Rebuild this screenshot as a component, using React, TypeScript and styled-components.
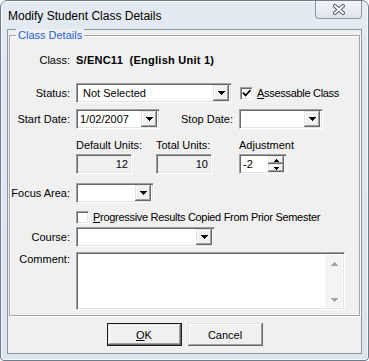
import React, { FC, ReactNode } from "react";
import styled, { createGlobalStyle, css } from "styled-components";

const GlobalStyle = createGlobalStyle`
  html, body {
    margin: 0;
    padding: 0;
    background: #ffffff;
  }
  body {
    font-family: "Liberation Sans", Arial, sans-serif;
    font-size: 11px;
    color: #000000;
  }
`;

// classic 3D borders
const sunken = css`
  box-sizing: border-box;
  border: 1px solid;
  border-color: #a0a0a0 #ffffff #ffffff #a0a0a0;
  box-shadow: inset 1px 1px 0 #696969, inset -1px -1px 0 #e3e3e3;
`;

const raised = css`
  box-sizing: border-box;
  background: #f0f0f0;
  box-shadow: inset -1px -1px 0 #696969, inset 1px 1px 0 #e3e3e3,
    inset -2px -2px 0 #a0a0a0, inset 2px 2px 0 #ffffff;
`;

const Window = styled.div`
  box-sizing: border-box;
  width: 369px;
  height: 361px;
  display: flex;
  flex-direction: column;
  padding: 0 6px 6px;
  border: 1px solid #6f7c8c;
  border-radius: 7px 7px 4px 4px;
  background: linear-gradient(180deg, #e4eaf1 0%, #dce3ec 100%);
  box-shadow: inset 0 0 0 1px rgba(255, 255, 255, 0.7);
  overflow: hidden;
`;

const TitleBar = styled.div`
  display: flex;
  align-items: flex-start;
  flex-shrink: 0;
  height: 28px;
  margin: 0 -6px;
  padding: 0 6px 0 7px;
`;

const Title = styled.div`
  margin-top: 8px;
  font-size: 12px;
  line-height: 14px;
  color: #000000;
`;

const CloseButton = styled.div`
  box-sizing: border-box;
  margin-left: auto;
  width: 47px;
  height: 18px;
  border: 1px solid #8d99a7;
  border-top: none;
  border-radius: 0 0 4px 4px;
  background: linear-gradient(180deg, #f3f5f8 0%, #dfe5ec 100%);
  display: flex;
  align-items: center;
  justify-content: center;
`;

const Client = styled.div`
  flex: 1;
  display: flex;
  flex-direction: column;
  border: 1px solid #8a96a4;
  background: #f0f0f0;
  padding: 5px 1px 7px;
`;

const GroupBox = styled.div`
  position: relative;
  border: 1px solid #a6a6a6;
  box-shadow: inset 1px 1px 0 #ffffff, 1px 1px 0 #ffffff;
  padding: 14px 0 5px;
`;

const GroupTitle = styled.span`
  position: absolute;
  top: -7px;
  left: 6px;
  padding: 0 2px;
  background: #f0f0f0;
  color: #1f62d6;
  line-height: 13px;
`;

const Row = styled.div<{ $top: number; $height: number; $align?: string }>`
  display: grid;
  grid-template-columns: 60px auto;
  column-gap: 6px;
  align-items: ${(p) => p.$align ?? "center"};
  margin-top: ${(p) => p.$top}px;
  height: ${(p) => p.$height}px;
`;

const Label = styled.span<{ $pad?: number }>`
  text-align: right;
  white-space: nowrap;
  line-height: 13px;
  padding-top: ${(p) => p.$pad ?? 0}px;
`;

const Field = styled.div`
  display: flex;
  align-items: center;
  height: 100%;
`;

const ClassValue = styled.span`
  font-weight: bold;
  white-space: pre;
  line-height: 13px;
  letter-spacing: 0.25px;
`;

const Combo = styled.div<{ $width: number }>`
  ${sunken};
  width: ${(p) => p.$width}px;
  height: 20px;
  padding: 2px;
  background: #ffffff;
  display: flex;
  align-items: center;
  flex-shrink: 0;
`;

const ComboText = styled.span<{ $indent: number }>`
  flex: 1;
  padding-left: ${(p) => p.$indent}px;
  line-height: 13px;
  white-space: nowrap;
  overflow: hidden;
`;

const DropButton = styled.span`
  ${raised};
  width: 16px;
  height: 16px;
  display: flex;
  align-items: center;
  justify-content: center;
`;

const SideLabel = styled.span<{ $width: number }>`
  width: ${(p) => p.$width}px;
  margin-right: 6px;
  text-align: right;
  white-space: nowrap;
  line-height: 13px;
`;

const CheckLine = styled.label<{ $left: number }>`
  display: flex;
  align-items: center;
  gap: 4px;
  margin-left: ${(p) => p.$left}px;
  line-height: 13px;
  white-space: nowrap;
  letter-spacing: -0.3px;
`;

const CheckBox = styled.span`
  ${sunken};
  width: 13px;
  height: 13px;
  background: #ffffff;
  display: flex;
  align-items: center;
  justify-content: center;
`;

const UnitsGrid = styled.div`
  display: grid;
  grid-template-columns: 80px 83px auto;
  grid-template-rows: 13px 20px;
  row-gap: 2px;
`;

const UnitLabel = styled.span`
  line-height: 13px;
  white-space: nowrap;
`;

const ReadOnlyBox = styled.div<{ $width: number }>`
  ${sunken};
  width: ${(p) => p.$width}px;
  height: 20px;
  padding: 0 3px;
  background: #f0f0f0;
  display: flex;
  align-items: center;
  justify-content: flex-end;
  line-height: 13px;
`;

const SpinBox = styled.div<{ $width: number }>`
  ${sunken};
  width: ${(p) => p.$width}px;
  height: 20px;
  padding: 2px;
  background: #ffffff;
  display: flex;
  align-items: center;
`;

const SpinButtons = styled.div`
  display: flex;
  flex-direction: column;
  width: 16px;
  height: 16px;
`;

const SpinButton = styled.span`
  ${raised};
  flex: 1;
  display: flex;
  align-items: center;
  justify-content: center;
`;

const MemoBox = styled.div<{ $width: number }>`
  ${sunken};
  width: ${(p) => p.$width}px;
  height: 58px;
  padding: 2px;
  background: #ffffff;
  display: flex;
  justify-content: flex-end;
`;

const ScrollTrack = styled.div`
  width: 16px;
  background: #f4f4f4;
  border-left: 1px solid #ececec;
  box-sizing: border-box;
  display: flex;
  flex-direction: column;
  justify-content: space-between;
  align-items: center;
  padding: 7px 0 5px;
`;

const ButtonRow = styled.div`
  display: flex;
  justify-content: center;
  gap: 6px;
  margin-top: 7px;
`;

const PushButton = styled.button<{ $default?: boolean }>`
  ${raised};
  width: 75px;
  height: 23px;
  padding: 0;
  margin: 0;
  font-family: inherit;
  font-size: 11px;
  color: #000000;
  border: ${(p) => (p.$default ? "1px solid #1e1e1e" : "none")};
`;

const DownArrow: FC<{ color?: string }> = ({ color = "#000" }) => (
  <svg width="7" height="4" viewBox="0 0 7 4" shapeRendering="crispEdges">
    <path d="M0 0h7v1H0zM1 1h5v1H1zM2 2h3v1H2zM3 3h1v1H3z" fill={color} />
  </svg>
);

const UpArrow: FC<{ color?: string }> = ({ color = "#000" }) => (
  <svg width="7" height="4" viewBox="0 0 7 4" shapeRendering="crispEdges">
    <path d="M3 0h1v1H3zM2 1h3v1H2zM1 2h5v1H1zM0 3h7v1H0z" fill={color} />
  </svg>
);

const SmallUp = () => (
  <svg width="5" height="3" viewBox="0 0 5 3" shapeRendering="crispEdges">
    <path d="M2 0h1v1H2zM1 1h3v1H1zM0 2h5v1H0z" fill="#000" />
  </svg>
);

const SmallDown = () => (
  <svg width="5" height="3" viewBox="0 0 5 3" shapeRendering="crispEdges">
    <path d="M0 0h5v1H0zM1 1h3v1H1zM2 2h1v1H2z" fill="#000" />
  </svg>
);

const CheckMark = () => (
  <svg width="9" height="9" viewBox="0 0 9 9">
    <path d="M1.5 4.2 L3.6 6.4 L7.8 1.8" stroke="#000" strokeWidth="1.7" fill="none" strokeLinecap="square" />
  </svg>
);

const CloseGlyph = () => (
  <svg width="14" height="11" viewBox="0 0 14 11">
    <path d="M3 2 L11 9 M11 2 L3 9" stroke="#566170" strokeWidth="4" strokeLinecap="round" />
    <path d="M3 2 L11 9 M11 2 L3 9" stroke="#ffffff" strokeWidth="2" strokeLinecap="round" />
  </svg>
);

const ComboBox: FC<{ width: number; text?: string; indent?: number }> = ({ width, text = "", indent = 4 }) => (
  <Combo $width={width}>
    <ComboText $indent={indent}>{text}</ComboText>
    <DropButton>
      <DownArrow />
    </DropButton>
  </Combo>
);

const Check: FC<{ checked?: boolean; left?: number; children: ReactNode }> = ({ checked, left = 0, children }) => (
  <CheckLine $left={left}>
    <CheckBox>{checked && <CheckMark />}</CheckBox>
    <span>{children}</span>
  </CheckLine>
);

const App: FC = () => {
  return (
    <>
      <GlobalStyle />
      <Window>
        <TitleBar>
          <Title>Modify Student Class Details</Title>
          <CloseButton>
            <CloseGlyph />
          </CloseButton>
        </TitleBar>
        <Client>
          <GroupBox>
            <GroupTitle>Class Details</GroupTitle>

            <Row $top={0} $height={20}>
              <Label>Class:</Label>
              <ClassValue>{"S/ENC11  (English Unit 1)"}</ClassValue>
            </Row>

            <Row $top={13} $height={20}>
              <Label>Status:</Label>
              <Field>
                <ComboBox width={156} text="Not Selected" />
                <Check checked left={8}>
                  <u>A</u>ssessable Class
                </Check>
              </Field>
            </Row>

            <Row $top={6} $height={20}>
              <Label>Start Date:</Label>
              <Field>
                <ComboBox width={84} text="1/02/2007" indent={1} />
                <SideLabel $width={73}>Stop Date:</SideLabel>
                <ComboBox width={84} />
              </Field>
            </Row>

            <Row $top={10} $height={35}>
              <span />
              <UnitsGrid>
                <UnitLabel>Default Units:</UnitLabel>
                <UnitLabel>Total Units:</UnitLabel>
                <UnitLabel>Adjustment</UnitLabel>
                <ReadOnlyBox $width={56}>12</ReadOnlyBox>
                <ReadOnlyBox $width={56}>10</ReadOnlyBox>
                <SpinBox $width={48}>
                  <ComboText $indent={1}>-2</ComboText>
                  <SpinButtons>
                    <SpinButton>
                      <SmallUp />
                    </SpinButton>
                    <SpinButton>
                      <SmallDown />
                    </SpinButton>
                  </SpinButtons>
                </SpinBox>
              </UnitsGrid>
            </Row>

            <Row $top={9} $height={20}>
              <Label>Focus Area:</Label>
              <Field>
                <ComboBox width={78} />
              </Field>
            </Row>

            <Row $top={8} $height={13}>
              <span />
              <Check>
                <u>P</u>rogressive Results Copied From Prior Semester
              </Check>
            </Row>

            <Row $top={3} $height={20}>
              <Label>Course:</Label>
              <Field>
                <ComboBox width={139} />
              </Field>
            </Row>

            <Row $top={5} $height={58} $align="start">
              <Label $pad={1}>Comment:</Label>
              <MemoBox $width={269}>
                <ScrollTrack>
                  <UpArrow color="#a3a3a3" />
                  <DownArrow color="#a3a3a3" />
                </ScrollTrack>
              </MemoBox>
            </Row>
          </GroupBox>

          <ButtonRow>
            <PushButton $default>
              <u>O</u>K
            </PushButton>
            <PushButton>Cancel</PushButton>
          </ButtonRow>
        </Client>
      </Window>
    </>
  );
};

export default App;
